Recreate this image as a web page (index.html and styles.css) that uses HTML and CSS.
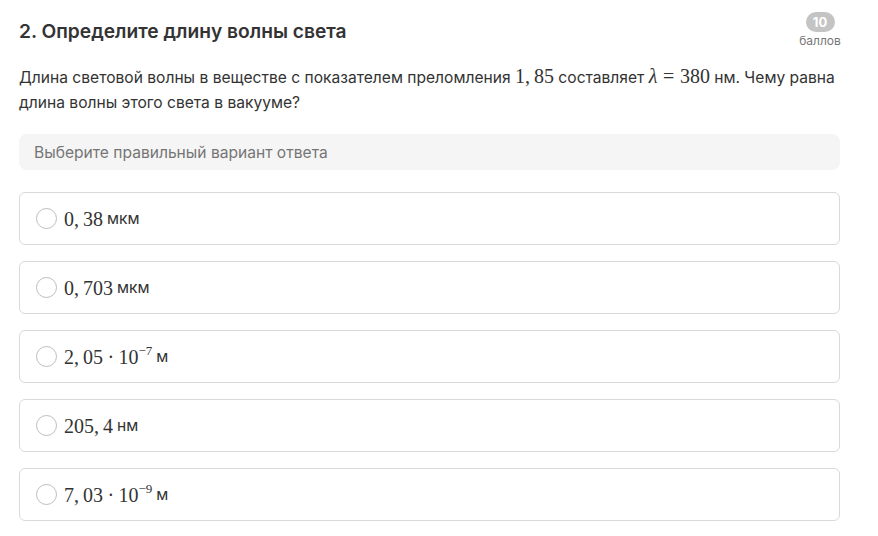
FILE: index.html
```html
<!DOCTYPE html>
<html lang="ru">
<head>
<meta charset="utf-8">
<link rel="stylesheet" href="styles.css">
</head>
<body>
<div class="task">
  <div class="head">
    <h2 class="title">2. Определите длину волны света</h2>
    <div class="score">
      <span class="badge">10</span>
      <span class="score-label">баллов</span>
    </div>
  </div>
  <p class="text">Длина световой волны в веществе с показателем преломления <span class="m">1,&#8201;85</span> составляет <span class="m"><i>λ</i><span class="rel">=</span>380</span> нм. Чему равна длина волны этого света в вакууме?</p>
  <div class="hint">Выберите правильный вариант ответа</div>
  <div class="options">
    <label class="option"><span class="radio"></span><span class="m">0,&#8201;38</span><span class="unit">мкм</span></label>
    <label class="option"><span class="radio"></span><span class="m">0,&#8201;703</span><span class="unit">мкм</span></label>
    <label class="option"><span class="radio"></span><span class="m">2,&#8201;05<span class="op">·</span>10<sup>−7</sup></span><span class="unit">м</span></label>
    <label class="option"><span class="radio"></span><span class="m">205,&#8201;4</span><span class="unit">нм</span></label>
    <label class="option"><span class="radio"></span><span class="m">7,&#8201;03<span class="op">·</span>10<sup>−9</sup></span><span class="unit">м</span></label>
  </div>
</div>
</body>
</html>
```
FILE: styles.css
```css
* { box-sizing: border-box; }
body {
  margin: 0;
  background: #fff;
  font-family: "Inter", "Open Sans", sans-serif;
  color: #333;
}
.task {
  padding: 12px 38px 0 19px;
}
.head {
  display: flex;
  justify-content: space-between;
  align-items: flex-start;
}
.title {
  margin: 7px 0 0;
  font-size: 19.2px;
  font-weight: 600;
  line-height: 24px;
  color: #333;
}
.score {
  display: flex;
  flex-direction: column;
  align-items: center;
  width: 46px;
  margin-right: -3px;
}
.badge {
  background: #c4c4c4;
  color: #fff;
  font-size: 13px;
  font-weight: 700;
  border-radius: 10px;
  min-width: 29px;
  height: 20px;
  line-height: 20px;
  text-align: center;
}
.score-label {
  font-size: 12px;
  color: #777;
  line-height: 16px;
  margin-top: 1px;
}
.text {
  margin: 16px 0 0;
  font-size: 15.6px;
  line-height: 25px;
  color: #333;
}
.m {
  font-family: "Liberation Serif", "DejaVu Serif", serif;
  font-size: 20px;
  line-height: 1;
}
.rel {
  margin: 0 0.28em;
}
.op {
  margin: 0 0.22em;
}
.m sup {
  font-size: 13px;
  vertical-align: 9px;
  line-height: 0;
}
.hint {
  margin-top: 19px;
  background: #f5f5f5;
  border-radius: 8px;
  height: 36px;
  padding: 0 15px;
  display: flex;
  align-items: center;
  font-size: 15.6px;
  color: #757575;
}
.options {
  margin-top: 22px;
  display: flex;
  flex-direction: column;
  gap: 16px;
}
.option {
  display: flex;
  align-items: center;
  height: 53px;
  border: 1px solid #d9d9d9;
  border-radius: 6px;
  padding: 0 16px;
  font-size: 15.6px;
  color: #333;
}
.radio {
  width: 21px;
  height: 21px;
  border: 1px solid #bdbdbd;
  border-radius: 50%;
  margin-right: 7px;
  flex: none;
}
.unit {
  margin-left: 4px;
}
```
